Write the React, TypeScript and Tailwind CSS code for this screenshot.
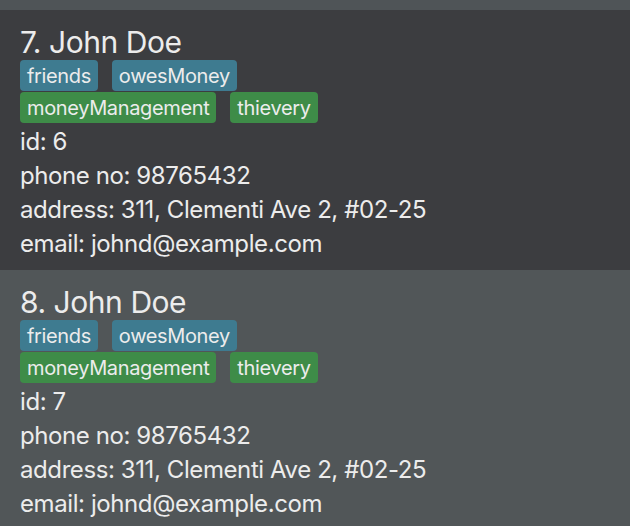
import React from "react";

type Person = { idx: number; id: number; dark: boolean };

const people: Person[] = [
  { idx: 7, id: 6, dark: true },
  { idx: 8, id: 7, dark: false },
];

function Tag({ label, color }: { label: string; color: "blue" | "green" }) {
  return (
    <span
      className={
        "h-[31px] px-[7px] rounded-[4px] flex items-center text-[20px] leading-none tracking-[-0.018em] text-[#ececec] " +
        (color === "blue" ? "bg-[#3e7b90]" : "bg-[#3e8c48]")
      }
    >
      {label}
    </span>
  );
}

function Card({ p }: { p: Person }) {
  return (
    <div
      className={
        "h-[260px] shrink-0 pt-[14px] pl-5 pr-4 flex flex-col text-[#ececec] " +
        (p.dark ? "bg-[#3c3d40]" : "bg-[#515658]")
      }
    >
      <div className="text-[30px] leading-[36px] h-[36px] tracking-[-0.015em]">{p.idx}. John Doe</div>
      <div className="flex flex-col gap-px">
        <div className="flex gap-[14px]">
          <Tag label="friends" color="blue" />
          <Tag label="owesMoney" color="blue" />
        </div>
        <div className="flex gap-[14px]">
          <Tag label="moneyManagement" color="green" />
          <Tag label="thievery" color="green" />
        </div>
      </div>
      <div className="mt-[2px] text-[24px] leading-[34px] tracking-[-0.017em]">
        <div>id: {p.id}</div>
        <div>phone no: 98765432</div>
        <div>address: 311, Clementi Ave 2, #02-25</div>
        <div>email: johnd@example.com</div>
      </div>
    </div>
  );
}

export default function App() {
  return (
    <div
      className="w-[630px] h-[526px] overflow-hidden bg-[#515658] flex flex-col"
      style={{ fontFamily: "Inter, 'Noto Sans', sans-serif" }}
    >
      <div className="h-[10px] shrink-0 bg-[#4f5457]" />
      {people.map((p) => (
        <Card key={p.idx} p={p} />
      ))}
    </div>
  );
}
